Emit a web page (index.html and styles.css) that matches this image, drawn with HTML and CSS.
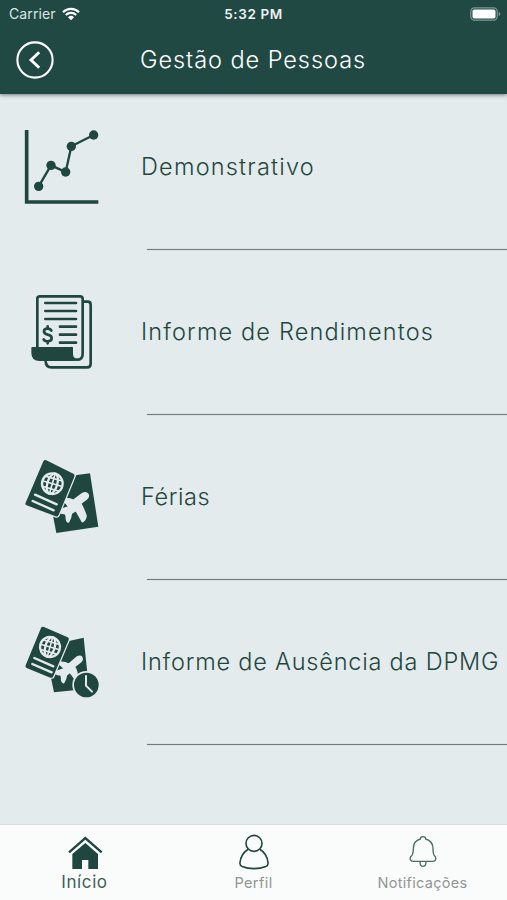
FILE: index.html
```html
<!DOCTYPE html>
<html lang="pt-BR">
<head>
    <meta charset="UTF-8">
    <meta name="viewport" content="width=device-width, initial-scale=1.0">
    <title>Gestão de Pessoas</title>
    <link rel="stylesheet" href="styles.css">
</head>
<body>
    <header class="header">
        <div class="status-bar">
            <div class="carrier">
                <span class="carrier-name">Carrier</span>
                <svg class="wifi" viewBox="0 0 18 14">
                    <path d="M1 5.2a11.5 11.5 0 0 1 16 0M3.8 8a7.6 7.6 0 0 1 10.4 0" fill="none" stroke="#fff" stroke-width="2.2"/>
                    <path d="M9 13.2 6 10.2a4.4 4.4 0 0 1 6 0z" fill="#fff"/>
                </svg>
            </div>
            <span class="time">5:32 PM</span>
            <svg class="battery" viewBox="0 0 31 14">
                <rect x=".8" y=".8" width="26.4" height="12.4" rx="3.6" fill="none" stroke="#7f9893" stroke-width="1.2"/>
                <rect x="2.5" y="2.5" width="23" height="9" rx="1.8" fill="#fff"/>
                <path d="M28.6 5v4q1.7-.7 1.7-2t-1.7-2z" fill="#7f9893"/>
            </svg>
        </div>
        <div class="title-bar">
            <svg class="back" viewBox="0 0 38 38">
                <circle cx="19" cy="19" r="17.6" fill="none" stroke="#fff" stroke-width="2.1"/>
                <path d="M23.2 11.2 15 19l8.2 7.800" fill="none" stroke="#fff" stroke-width="2.9"/>
            </svg>
            <h1 class="title">Gestão de Pessoas</h1>
        </div>
    </header>

    <main class="menu">
        <div class="item">
            <div class="item-content">
                <svg class="item-icon" viewBox="42 42 228 228">
                    <path d="M50 45v216h215" fill="none" stroke="#1f4740" stroke-width="11"/>
                    <path d="m86 214 37-63 44 20 17-77 67-34" fill="none" stroke="#1f4740" stroke-width="7"/>
                    <g fill="#1f4740">
                        <circle cx="86" cy="214" r="14"/>
                        <circle cx="123" cy="151" r="14"/>
                        <circle cx="167" cy="171" r="14"/>
                        <circle cx="184" cy="94" r="14"/>
                        <circle cx="251" cy="60" r="14"/>
                    </g>
                </svg>
                <span class="label label-demonstrativo">Demonstrativo</span>
            </div>
            <hr class="divider">
        </div>

        <div class="item">
            <div class="item-content">
                <svg class="item-icon" viewBox="27 42 228 228">
                    <g fill="none" stroke="#1f4740" stroke-width="8" stroke-linecap="round" stroke-linejoin="round">
                        <path d="M67 202V56q0-7 8-7h120q8 0 8 8v164q0 18-17 18-16 0-16-18v-17"/>
                        <path d="M205 65h13q9 0 9 9v177q0 11-11 11H109q-16 0-17-18"/>
                        <path d="M91 69h92M91 93h92M91 117h92M135 140h48M135 164h48M135 188h48"/>
                        <path d="M109 152q-3-6-11-6-11 0-11 8 0 8 11 10 12 2 12 11 0 9-12 9-9 0-12-6M98 139v7M98 184v6"/>
                    </g>
                    <path d="M49 204q0-3 4-3h119v22q0 13 9 20H74q-25 0-25-25z" fill="#1f4740"/>
                </svg>
                <span class="label label-rendimentos">Informe de Rendimentos</span>
            </div>
            <hr class="divider">
        </div>

        <div class="item">
            <div class="item-content">
                <svg class="item-icon" viewBox="27 27 228 228">
                    <path d="m180 76 45-6 25 160-126 19-10-52z" fill="#1f4740"/>
                    <path d="M142 147q19-3 33 4l27-20q11-6 16 1 5 8-4 15l-17 13q9 18 16 37-1 13-11 18l-19-34-14 9q-1 13-9 26-7-2-6-18l-4-8q-11 1-18-5 0-5 12-9l18-6z" fill="#e4ebed" stroke="#e4ebed" stroke-width="5" stroke-linejoin="round"/>
                    <path d="M91 27q-7-2-10 5L27 159q-3 7 4 10l92 34q7 2 11-6l49-119q3-8-4-11z" fill="#e4ebed"/>
                    <path d="M94 31q-6-3-9 3L32 158q-3 6 3 8l87 33q6 2 9-4l47-115q2-6-3-9z" fill="#1f4740"/>
                    <g fill="none" stroke="#e4ebed" stroke-width="7">
                        <g transform="rotate(16 112 101)">
                            <circle cx="112" cy="101" r="31"/>
                            <ellipse cx="112" cy="101" rx="15" ry="31"/>
                            <path d="M112 70v62M81 101h62M86 85h52M86 117h52" stroke-width="5"/>
                        </g>
                        <path d="m60 134 65 29M53 153l63 28" stroke-linecap="round"/>
                    </g>
                </svg>
                <span class="label label-ferias">Férias</span>
            </div>
            <hr class="divider">
        </div>

        <div class="item">
            <div class="item-content">
                <svg class="item-icon" viewBox="27 27 228 228">
                    <path d="m162 78 44-10 16 153-105 11-10-48z" fill="#1f4740"/>
                    <path d="M129 143q19-3 32 5l26-22q9-5 13 1 4 7-4 14l-18 14q10 15 7 31l-7 3-13-18-11 9q-1 12-8 23-7-2-6-17l-3-7q-9 1-15-4 0-6 12-9l15-5z" fill="#e4ebed" stroke="#e4ebed" stroke-width="5" stroke-linejoin="round"/>
                    <path d="m80 30 81 34q7 4 4 11l-47 112q-4 6-11 4L31 163q-6-3-4-10z" fill="#e4ebed"/>
                    <path d="M87 36q-6-3-9 3L32 151q-3 6 3 8l71 29q6 2 9-4l46-109q2-6-3-8z" fill="#1f4740"/>
                    <g fill="none" stroke="#e4ebed" stroke-width="7">
                        <g transform="rotate(16 105 96)">
                            <circle cx="105" cy="96" r="30"/>
                            <ellipse cx="105" cy="96" rx="14" ry="30"/>
                            <path d="M105 66v60M75 96h60M80 81h50M80 111h50" stroke-width="5"/>
                        </g>
                        <path d="m58 129 57 25M52 147l58 25" stroke-linecap="round"/>
                    </g>
                    <circle cx="214" cy="210" r="42" fill="#e4ebed"/>
                    <circle cx="214" cy="210" r="37" fill="#1f4740"/>
                    <path d="M213 183v29l18 18" fill="none" stroke="#e4ebed" stroke-width="6" stroke-linecap="round"/>
                </svg>
                <span class="label label-ausencia">Informe de Ausência da DPMG</span>
            </div>
            <hr class="divider">
        </div>
    </main>

    <nav class="tabs">
        <a class="tab active">
            <svg class="tab-icon" viewBox="201 57 108 108">
                <path d="m207 112 49-43 49 43" fill="none" stroke="#1f4740" stroke-width="7"/>
                <path d="m256 84 38 33v45h-29v-27h-19v27h-29v-45z" fill="#1f4740"/>
            </svg>
            <span class="tab-label tab-inicio">Início</span>
        </a>
        <a class="tab">
            <svg class="tab-icon" viewBox="0 0 36 36">
                <g fill="none" stroke="#1f4740" stroke-width="1.6" stroke-linejoin="round">
                    <circle cx="18" cy="9.4" r="8"/>
                    <path d="M12.2 15.2C7.500 18 4.300 23.500 3.900 29c-.1 1.700.7 2.700 2.200 3.400 7 2.900 16.800 2.900 23.800 0 1.500-.7 2.300-1.700 2.200-3.400-.4-5.500-3.600-11-8.300-13.800"/>
                </g>
            </svg>
            <span class="tab-label tab-perfil">Perfil</span>
        </a>
        <a class="tab">
            <svg class="tab-icon" viewBox="453 57 108 108">
                <g fill="none" stroke="#4e6c66" stroke-width="4" stroke-linejoin="round">
                    <path d="M499 72q0-7 8-7t8 7c15 4 22 15 22 29 0 14 1 20 7 24 4 7 0 14-7 14h-60c-7 0-11-7-7-14 6-4 8-10 8-24 0-14 6-25 21-29z"/>
                    <path d="M498 141q0 13 9 13t9-13"/>
                </g>
            </svg>
            <span class="tab-label tab-notificacoes">Notificações</span>
        </a>
    </nav>
</body>
</html>
```
FILE: styles.css
```css
* {
    box-sizing: border-box;
}

body {
    margin: 0;
    height: 100vh;
    display: flex;
    flex-direction: column;
    overflow: hidden;
    background-color: #e4ebed;
    font-family: Inter, sans-serif;
    color: #1f4740;
}

/* Cabeçalho */
.header {
    height: 94px;
    flex: none;
    background-color: #214943;
    color: #fff;
    box-shadow: 0 1px 4px rgba(0, 0, 0, 0.5);
}

.status-bar {
    display: grid;
    grid-template-columns: 1fr auto 1fr;
    align-items: center;
    height: 27px;
    padding: 0 6px 0 9px;
}

.carrier {
    display: flex;
    align-items: center;
    gap: 6px;
    font-size: 14px;
    color: #dde4e3;
}

.carrier-name {
    letter-spacing: 0.1px;
}

.wifi {
    width: 18px;
    height: 14px;
}

.time {
    margin-right: 3px;
    font-size: 13.5px;
    font-weight: 600;
    letter-spacing: 0.6px;
    color: #eef2f1;
}

.battery {
    width: 31px;
    height: 14px;
    justify-self: end;
}

.title-bar {
    display: flex;
    align-items: center;
    height: 66px;
    padding-left: 16px;
}

.back {
    width: 38px;
    height: 38px;
}

.title {
    margin: 0 0 0 86px;
    padding-bottom: 2px;
    font-size: 23.5px;
    font-weight: 350;
    letter-spacing: 0.95px;
    white-space: nowrap;
}

/* Lista de opções */
.menu {
    flex: 1;
    display: flex;
    flex-direction: column;
    gap: 9px;
}

.item-content {
    display: flex;
    align-items: center;
    gap: 41px;
    height: 146px;
    padding-left: 24px;
}

.item-icon {
    width: 76px;
    height: 76px;
    flex: none;
}

.label {
    padding-bottom: 2px;
    font-size: 23.5px;
    font-weight: 300;
    white-space: nowrap;
    letter-spacing: 0.8px;
}

.label-demonstrativo {
    letter-spacing: 1.2px;
}

.label-rendimentos {
    letter-spacing: 1.15px;
}

.label-ferias {
    letter-spacing: 0.6px;
}

.divider {
    margin: 9px 0 0 147px;
    height: 1px;
    border: 0;
    background-color: #737b7c;
    box-shadow: 0 0 1px #8a9192;
}

/* Barra inferior */
.tabs {
    display: grid;
    grid-template-columns: repeat(3, 1fr);
    flex: none;
    height: 76px;
    border-top: 1px solid #d8dddf;
    background-color: #fafbfb;
}

.tab {
    display: flex;
    flex-direction: column;
    align-items: center;
    padding-top: 9px;
    color: #929696;
}

.tab-icon {
    width: 36px;
    height: 36px;
}

.tab-label {
    margin-top: 4px;
    font-size: 14.5px;
    line-height: 18px;
}

.tab-perfil {
    letter-spacing: 0.4px;
}

.tab-notificacoes {
    letter-spacing: 0.3px;
}

.active {
    color: #3d5f59;
}

.active .tab-label {
    margin-top: 3px;
    font-size: 17px;
    letter-spacing: 0.6px;
}
```
